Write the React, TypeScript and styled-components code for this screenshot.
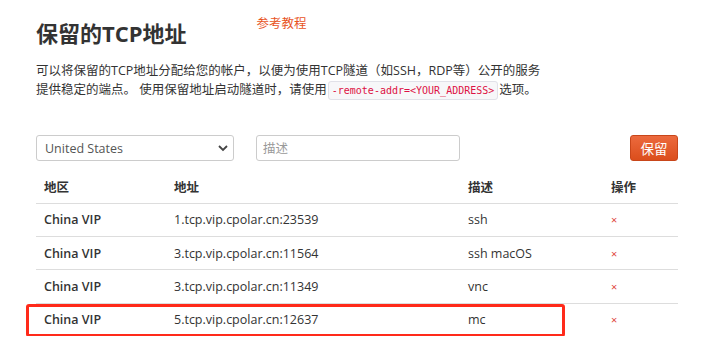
import styled, { createGlobalStyle } from 'styled-components';

const GlobalStyle = createGlobalStyle`
    body {
        margin: 0;
        background: #fff;
        font-family: "Open Sans", "Noto Sans CJK SC", sans-serif;
        color: #333;
    }
`;

const Page = styled.div`
    position: relative;
    padding: 14px 0 0 36px;
    width: 642px;
`;

const TitleRow = styled.div`
    display: flex;
    align-items: flex-start;
    gap: 70px;
`;

const Title = styled.h1`
    margin: 4px 0 0;
    font-size: 22px;
    line-height: 30px;
    font-weight: 700;
    color: #333;
`;

const GuideLink = styled.a`
    margin-top: 1px;
    font-size: 12.5px;
    line-height: 18px;
    color: #e8541e;
    text-decoration: none;
`;

const Intro = styled.p`
    margin: 13px 0 0;
    font-size: 12.5px;
    line-height: 19px;
    color: #333;
`;

const Code = styled.code`
    display: inline-block;
    padding: 0 3px;
    margin: 0 1px;
    font-family: "DejaVu Sans Mono", monospace;
    font-size: 10px;
    line-height: 17px;
    color: #dd1144;
    background: #f7f7f9;
    border: 1px solid #e1e1e8;
    border-radius: 3px;
`;

const Controls = styled.div`
    display: flex;
    align-items: center;
    margin-top: 35px;
    height: 26px;
`;

const SelectWrap = styled.div`
    position: relative;
    width: 198px;
    height: 26px;
`;

const Select = styled.select`
    appearance: none;
    width: 100%;
    height: 100%;
    padding: 0 24px 0 8px;
    font-family: inherit;
    font-size: 12.5px;
    color: #555;
    background: #fff;
    border: 1px solid #ccc;
    border-radius: 3px;
`;

const Chevron = styled.svg`
    position: absolute;
    right: 6px;
    top: 9px;
    pointer-events: none;
`;

const TextInput = styled.input`
    margin-left: 22px;
    width: 204px;
    height: 26px;
    box-sizing: border-box;
    padding: 0 6px;
    font-family: inherit;
    font-size: 12.5px;
    color: #555;
    border: 1px solid #ccc;
    border-radius: 3px;
    &::placeholder {
        color: #999;
    }
`;

const SaveButton = styled.button`
    margin-left: auto;
    width: 48px;
    height: 26px;
    padding: 0;
    font-family: inherit;
    font-size: 13.5px;
    color: #fff;
    background: linear-gradient(#ec6a3e, #db4e1c);
    border: 1px solid #c8461a;
    border-radius: 3px;
`;

const Table = styled.table`
    margin-top: 9px;
    width: 642px;
    table-layout: fixed;
    border-collapse: collapse;
    font-size: 12.5px;
`;

const Th = styled.th<{ $w: number }>`
    box-sizing: border-box;
    width: ${p => p.$w}px;
    height: 33px;
    padding: 0 8px;
    text-align: left;
    font-weight: 600;
    color: #333;
    border-bottom: 1px solid #ddd;
`;

const Td = styled.td<{ $bold?: boolean; $last?: boolean }>`
    height: 32.4px;
    padding: 0 8px;
    font-weight: ${p => (p.$bold ? 600 : 400)};
    color: #333;
    border-bottom: ${p => (p.$last ? 'none' : '1px solid #ddd')};
    white-space: nowrap;
`;

const Remove = styled.span`
    color: #e0443a;
    font-size: 11px;
`;

const Highlight = styled.div`
    position: absolute;
    left: 26px;
    top: 304px;
    width: 533px;
    height: 27px;
    border: 3px solid #ff2a1a;
    border-radius: 3px;
    pointer-events: none;
`;

const rows = [
    { region: 'China VIP', addr: '1.tcp.vip.cpolar.cn:23539', desc: 'ssh' },
    { region: 'China VIP', addr: '3.tcp.vip.cpolar.cn:11564', desc: 'ssh macOS' },
    { region: 'China VIP', addr: '3.tcp.vip.cpolar.cn:11349', desc: 'vnc' },
    { region: 'China VIP', addr: '5.tcp.vip.cpolar.cn:12637', desc: 'mc' }
];

export default function App() {
    return (
        <>
            <GlobalStyle />
            <Page>
                <TitleRow>
                    <Title>保留的TCP地址</Title>
                    <GuideLink href="#">参考教程</GuideLink>
                </TitleRow>
                <Intro>
                    可以将保留的TCP地址分配给您的帐户，以便为使用TCP隧道（如SSH，RDP等）公开的服务
                    <br />
                    提供稳定的端点。 使用保留地址启动隧道时，请使用<Code>-remote-addr=&lt;YOUR_ADDRESS&gt;</Code>选项。
                </Intro>
                <Controls>
                    <SelectWrap>
                        <Select defaultValue="us">
                            <option value="us">United States</option>
                            <option value="cn">China VIP</option>
                        </Select>
                        <Chevron width="10" height="8" viewBox="0 0 10 8">
                            <path d="M1 2l4 4 4-4" fill="none" stroke="#444" strokeWidth="1.8" />
                        </Chevron>
                    </SelectWrap>
                    <TextInput placeholder="描述" />
                    <SaveButton>保留</SaveButton>
                </Controls>
                <Table>
                    <thead>
                        <tr>
                            <Th $w={130}>地区</Th>
                            <Th $w={294}>地址</Th>
                            <Th $w={143}>描述</Th>
                            <Th $w={75}>操作</Th>
                        </tr>
                    </thead>
                    <tbody>
                        {rows.map((r, i) => {
                            const last = i === rows.length - 1;
                            return (
                                <tr key={r.addr}>
                                    <Td $bold $last={last}>{r.region}</Td>
                                    <Td $last={last}>{r.addr}</Td>
                                    <Td $last={last}>{r.desc}</Td>
                                    <Td $last={last}><Remove>×</Remove></Td>
                                </tr>
                            );
                        })}
                    </tbody>
                </Table>
                <Highlight />
            </Page>
        </>
    );
}
